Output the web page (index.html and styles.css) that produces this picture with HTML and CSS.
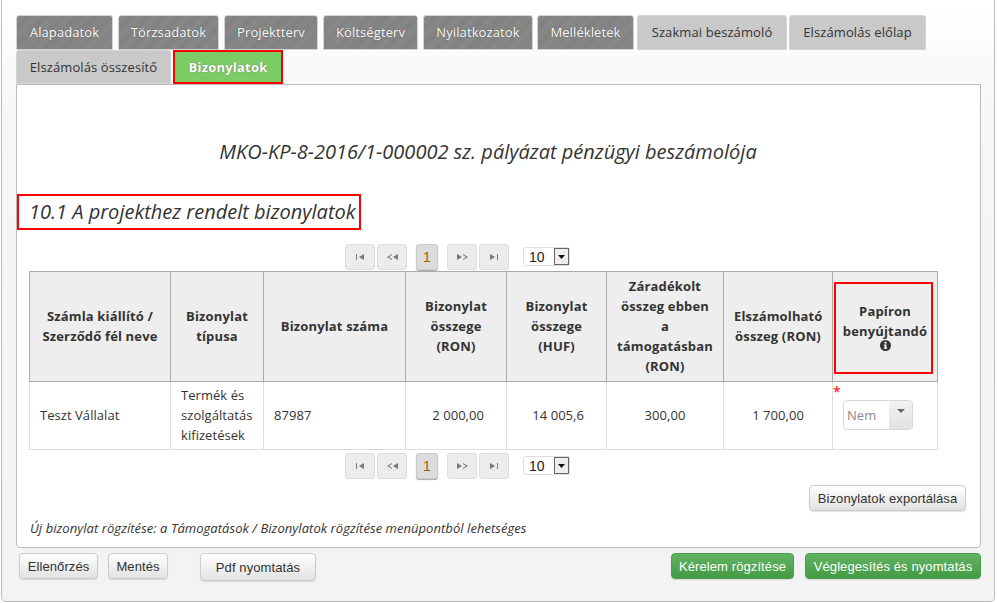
FILE: index.html
```html
<!DOCTYPE html>
<html lang="hu">
<head>
<meta charset="utf-8">
<title>Bizonylatok</title>
<link rel="stylesheet" href="styles.css">
</head>
<body>
<div class="frame">
  <div class="tabs">
    <a class="tab dark w1">Alapadatok</a>
    <a class="tab dark w2">Törzsadatok</a>
    <a class="tab dark w3">Projektterv</a>
    <a class="tab dark w4">Költségterv</a>
    <a class="tab dark w5">Nyilatkozatok</a>
    <a class="tab dark w6">Mellékletek</a>
    <a class="tab light w7">Szakmai beszámoló</a>
    <a class="tab light w8">Elszámolás előlap</a>
  </div>
  <div class="tabs second">
    <a class="tab light w9">Elszámolás összesítő</a>
    <a class="tab active">Bizonylatok</a>
  </div>
  <div class="panel">
    <h2 class="main-title">MKO-KP-8-2016/1-000002 sz. pályázat pénzügyi beszámolója</h2>
    <h3 class="sub-title">10.1 A projekthez rendelt bizonylatok</h3>
    <div class="pager">
      <span class="pg"><svg width="8" height="6" viewBox="0 0 8 6"><path d="M0 0h1v6H0zM8 0v6L3 3z" fill="#777"/></svg></span>
      <span class="pg"><svg width="11" height="6" viewBox="0 0 11 6"><path d="M5 0v1L2 3l3 2v1L0 3zM11 0v6L6 3z" fill="#777"/></svg></span>
      <span class="pg current">1</span>
      <span class="pg"><svg width="11" height="6" viewBox="0 0 11 6"><path d="M0 0v6l5-3zM6 0v1l3 2-3 2v1l5-3z" fill="#777"/></svg></span>
      <span class="pg"><svg width="8" height="6" viewBox="0 0 8 6"><path d="M0 0v6l5-3zM7 0h1v6H7z" fill="#777"/></svg></span>
      <span class="size"><span class="size-val">10</span><span class="size-btn"><svg width="7" height="4" viewBox="0 0 7 4"><path d="M0 0h7L3.500 4z" fill="#111"/></svg></span></span>
    </div>
    <table class="grid">
      <colgroup>
        <col class="c1"><col class="c2"><col class="c3"><col class="c4"><col class="c5"><col class="c6"><col class="c7"><col class="c8">
      </colgroup>
      <thead>
        <tr>
          <th>Számla kiállító / Szerződő fél neve</th>
          <th>Bizonylat típusa</th>
          <th>Bizonylat száma</th>
          <th>Bizonylat összege (RON)</th>
          <th>Bizonylat összege (HUF)</th>
          <th>Záradékolt összeg ebben a támogatásban (RON)</th>
          <th>Elszámolható összeg (RON)</th>
          <th class="paper-th"><div class="paper-box">Papíron benyújtandó<svg class="info" width="11" height="11" viewBox="0 0 11 11"><circle cx="5.500" cy="5.500" r="5.500" fill="#333"/><rect x="4.500" y="1.800" width="2" height="1.800" fill="#fff"/><path d="M3.800 4.500h2.700v3.300h.8v1H3.800v-1h.8V5.500h-.8z" fill="#fff"/></svg></div></th>
        </tr>
      </thead>
      <tbody>
        <tr>
          <td class="pad-l">Teszt Vállalat</td>
          <td>Termék és szolgáltatás kifizetések</td>
          <td>87987</td>
          <td class="right">2 000,00</td>
          <td class="right">14 005,6</td>
          <td class="center">300,00</td>
          <td class="center">1 700,00</td>
          <td class="select-cell"><span class="req">*</span><span class="combo"><span class="combo-val">Nem</span><span class="combo-btn"><svg width="8" height="4" viewBox="0 0 8 4"><path d="M0 0h8L4 4z" fill="#666"/></svg></span></span></td>
        </tr>
      </tbody>
    </table>
    <div class="pager bottom">
      <span class="pg"><svg width="8" height="6" viewBox="0 0 8 6"><path d="M0 0h1v6H0zM8 0v6L3 3z" fill="#777"/></svg></span>
      <span class="pg"><svg width="11" height="6" viewBox="0 0 11 6"><path d="M5 0v1L2 3l3 2v1L0 3zM11 0v6L6 3z" fill="#777"/></svg></span>
      <span class="pg current">1</span>
      <span class="pg"><svg width="11" height="6" viewBox="0 0 11 6"><path d="M0 0v6l5-3zM6 0v1l3 2-3 2v1l5-3z" fill="#777"/></svg></span>
      <span class="pg"><svg width="8" height="6" viewBox="0 0 8 6"><path d="M0 0v6l5-3zM7 0h1v6H7z" fill="#777"/></svg></span>
      <span class="size"><span class="size-val">10</span><span class="size-btn"><svg width="7" height="4" viewBox="0 0 7 4"><path d="M0 0h7L3.500 4z" fill="#111"/></svg></span></span>
    </div>
    <div class="export-row"><button class="btn">Bizonylatok exportálása</button></div>
    <p class="note">Új bizonylat rögzítése: a Támogatások / Bizonylatok rögzítése menüpontból lehetséges</p>
  </div>
  <div class="actions">
    <button class="btn b-check">Ellenőrzés</button>
    <button class="btn b-save">Mentés</button>
    <button class="btn b-pdf">Pdf nyomtatás</button>
    <span class="spacer"></span>
    <button class="btn green b-rec">Kérelem rögzítése</button>
    <button class="btn green b-final">Véglegesítés és nyomtatás</button>
  </div>
</div>
</body>
</html>
```
FILE: styles.css
```css
* { box-sizing: border-box; }
html, body { margin: 0; padding: 0; background: #fff; }
body { width: 997px; height: 603px; overflow: hidden; font-family: "Open Sans", sans-serif; font-size: 13px; color: #333; }
.frame {
  width: 994px; height: 602px; margin-left: 1px;
  border: 1px solid #bbb; border-top: 0; border-radius: 0 0 5px 5px;
  background: linear-gradient(#fff 0, #f6f6f6 20%, #f3f3f3 90%);
  padding: 15px 0 0 14px;
}
.tabs { display: flex; height: 35px; }
.tabs.second { height: 34px; }
.tab {
  display: flex; align-items: center; justify-content: center;
  height: 35px; margin-right: 5px; border-radius: 3px 3px 0 0;
  border: 1px solid #d4d4d4; font-size: 13px; padding-bottom: 1px; letter-spacing: .1px;
}
.second .tab { height: 34px; }
.dark {
  background: repeating-linear-gradient(135deg, #8a8a8a 0 1px, #7f7f7f 1px 2px);
  color: #fff; text-shadow: 0 0 1px #444;
}
.light { background: #c9c9c9; color: #333; }
.w1 { width: 97px; } .w2 { width: 101px; } .w3 { width: 94px; } .w4 { width: 95px; }
.w5 { width: 110px; margin-right: 4px; } .w6 { width: 97px; margin-right: 3px; } .w7 { width: 150px; margin-right: 2px; } .w8 { width: 137px; }
.w9 { width: 155px; margin-right: 2px; }
.active {
  width: 110px; background: #7ccc66; color: #fff; font-weight: 700; letter-spacing: .2px;
  border: 2px solid #f00; border-radius: 0; text-shadow: 0 0 1px #555;
}
.panel {
  width: 965px; height: 464px; background: #fff; border: 1px solid #bbb;
  border-radius: 0 0 4px 4px; padding: 0;
}
.main-title {
  margin: 0; padding: 55px 21px 0 0; height: 109px; line-height: 24px;
  text-align: center; font-size: 20px; font-weight: 400; font-style: italic; color: #333;
}
.sub-title {
  display: inline-block; margin: 0; width: 344px; height: 36px; line-height: 31px;
  border: 2px solid #f00; padding-left: 10px;
  font-size: 20px; font-weight: 400; font-style: italic; color: #333; vertical-align: top;
}
.pager { display: flex; align-items: center; height: 25px; margin-top: 14px; padding-left: 328px; }
.pager.bottom { margin-top: 3px; }
.pg {
  display: flex; align-items: center; justify-content: center;
  width: 30px; height: 26px; margin-right: 2px; background: #ececec;
  border: 1px solid #ddd; border-radius: 3px; flex: none;
}
.pg.current { width: 22px; margin: 0 9px 0 7px; background: #dcdcdc; border-color: #ccc; color: #a65a00; box-shadow: 0 1px 1px #aaa; font-size: 14px; font-family: "Liberation Sans", sans-serif; }
.size {
  display: flex; align-items: center; width: 47px; height: 19px; margin-left: 12px;
  border: 1px solid #ddd; border-radius: 3px; font-family: "Liberation Sans", sans-serif; font-size: 14px; color: #222;
}
.size-val { flex: 1; padding-left: 5px; }
.size-btn { display: flex; align-items: center; justify-content: center; width: 15px; height: 17px; background: #eee; border: 1px solid #666; }
.grid {
  table-layout: fixed; width: 908px; margin: 2px 0 0 12px; border-collapse: collapse;
}
.c1 { width: 141px; } .c2 { width: 93px; } .c3 { width: 142px; } .c4 { width: 101px; }
.c5 { width: 100px; } .c6 { width: 117px; } .c7 { width: 109px; } .c8 { width: 105px; }
.grid th {
  height: 110px; padding: 0 10px 2px; background: #eee; border: 1px solid #aaa;
  font-size: 13px; line-height: 20px; font-weight: 700; text-align: center; color: #333; letter-spacing: .15px;
}
.grid td {
  height: 68px; padding: 0 10px 2px; border: 1px solid #ddd; line-height: 20px; font-size: 13px; color: #333; letter-spacing: .05px;
}
.grid td.right { text-align: right; padding-right: 22px; }
.grid td.center { text-align: center; }
.grid th.paper-th { padding: 0; }
.paper-box {
  width: 99px; height: 92px; margin: 2px 0 0 1px; padding: 17px 0 0 3px;
  border: 2px solid #f00; line-height: 20px;
}
.info { display: block; margin: -1px auto 0; }
.select-cell { position: relative; padding: 0 !important; vertical-align: top; }
.req { position: absolute; left: 0; top: 2px; color: #f00; font-size: 14px; line-height: 16px; }
.combo {
  display: flex; width: 70px; height: 30px; margin: 18px 0 0 10px;
  border: 1px solid #d8d8d8; border-radius: 4px; background: #fff; color: #888;
}
.combo-val { flex: 1; padding-left: 3px; line-height: 28px; }
.combo-btn { display: flex; justify-content: center; padding-top: 8px; width: 23px; background: linear-gradient(#f2f2f2, #e2e2e2); border-radius: 0 3px 3px 0; }
.export-row { display: flex; justify-content: flex-end; padding: 7px 14px 0 0; }
.btn {
  height: 26px; padding: 0; border: 1px solid #ccc; border-radius: 4px;
  background: linear-gradient(#fff, #e2e2e2); color: #333;
  font-family: "Liberation Sans", sans-serif; font-size: 13px; letter-spacing: .1px;
  box-shadow: 0 1px 1px rgba(0,0,0,.12);
}
.export-row .btn { width: 157px; }
.note { margin: 7px 0 0 13px; font-size: 13px; font-style: italic; color: #333; line-height: 20px; letter-spacing: .05px; }
.actions { display: flex; align-items: flex-start; padding: 5px 0 0 3px; width: 965px; }
.b-check { width: 79px; margin-right: 10px; }
.b-save { width: 60px; margin-right: 32px; }
.b-pdf { width: 116px; height: 28px; }
.spacer { flex: 1; }
.green { background: linear-gradient(#63b363, #439b43); border-color: #46a046; color: #fff; }
.b-rec { width: 123px; margin-right: 11px; }
.b-final { width: 176px; }
```
